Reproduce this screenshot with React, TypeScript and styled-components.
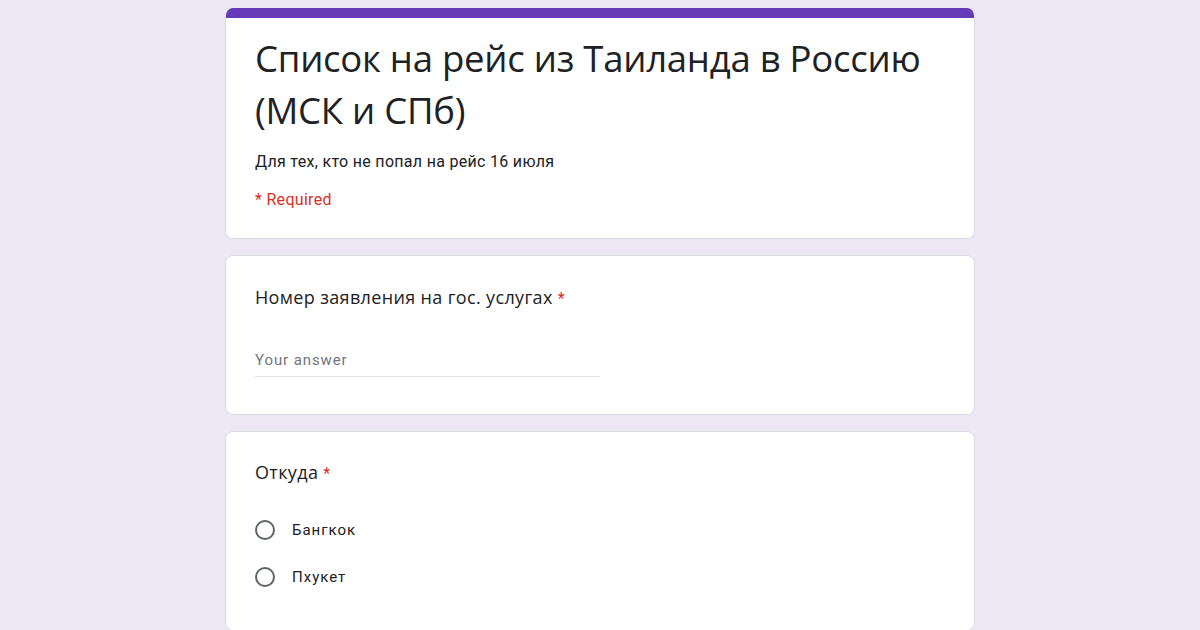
import React from "react";
import styled, { createGlobalStyle } from "styled-components";

const Global = createGlobalStyle`
  html, body { margin: 0; padding: 0; }
  body {
    background: #ede7f6;
    font-family: Roboto, "Noto Sans", Arial, sans-serif;
    color: #202124;
    height: 630px;
    overflow: hidden;
  }
`;

const Page = styled.div`
  width: 750px;
  margin: 8px auto 0;
  display: flex;
  flex-direction: column;
  gap: 16px;
`;

const Card = styled.div<{ $top?: boolean }>`
  background: #fff;
  border: 1px solid #dadce0;
  border-radius: 8px;
  box-sizing: border-box;
  overflow: hidden;
  ${(p) => (p.$top ? "border-top: none;" : "")}
`;

const TopBar = styled.div`
  height: 10px;
  background: #673ab7;
`;

const CardBody = styled.div<{ $pt: number; $pb: number }>`
  padding: ${(p) => p.$pt}px 29px ${(p) => p.$pb}px;
  display: flex;
  flex-direction: column;
`;

const Title = styled.h1`
  margin: 0;
  font-family: "Open Sans", Roboto, sans-serif;
  font-weight: 400;
  font-size: 36.5px;
  line-height: 52px;
  letter-spacing: -0.25px;
  color: #202124;
`;

const Desc = styled.div`
  margin-top: 15px;
  font-size: 16px;
  line-height: 22px;
  letter-spacing: 0.3px;
  color: #202124;
`;

const Required = styled.div`
  margin-top: 16px;
  font-size: 16px;
  line-height: 22px;
  letter-spacing: 0.3px;
  color: #d93025;
`;

const Question = styled.div`
  font-family: "Open Sans", Roboto, sans-serif;
  font-size: 18px;
  line-height: 26px;
  height: 26px;
  letter-spacing: 0.35px;
  color: #202124;
`;

const Star = styled.span`
  color: #d93025;
  margin-left: 5px;
  font-family: Roboto, sans-serif;
  font-size: 16px;
  line-height: 0;
`;

const Answer = styled.div`
  margin-top: 39px;
  width: 345px;
  border-bottom: 1px solid #e0e0e0;
  padding-bottom: 5px;
  font-size: 15px;
  line-height: 22px;
  color: #70757a;
  letter-spacing: 0.9px;
`;

const Options = styled.div`
  margin-top: 32px;
  display: flex;
  flex-direction: column;
  gap: 21px;
`;

const Option = styled.label`
  display: flex;
  align-items: center;
  gap: 17px;
  font-size: 15px;
  line-height: 26px;
  letter-spacing: 1px;
  color: #202124;
`;

const Radio = styled.span`
  width: 16px;
  height: 16px;
  border: 2px solid #5f6368;
  border-radius: 50%;
  flex: none;
`;

export default function App() {
  return (
    <>
      <Global />
      <Page>
        <Card $top>
          <TopBar />
          <CardBody $pt={14} $pb={27}>
            <Title>
              Список на рейс из Таиланда в Россию
              <br />
              (МСК и СПб)
            </Title>
            <Desc>Для тех, кто не попал на рейс 16 июля</Desc>
            <Required>* Required</Required>
          </CardBody>
        </Card>
        <Card>
          <CardBody $pt={28} $pb={37}>
            <Question>
              Номер заявления на гос. услугах<Star>*</Star>
            </Question>
            <Answer>Your answer</Answer>
          </CardBody>
        </Card>
        <Card>
          <CardBody $pt={27} $pb={40}>
            <Question>
              Откуда<Star>*</Star>
            </Question>
            <Options>
              <Option>
                <Radio />
                Бангкок
              </Option>
              <Option>
                <Radio />
                Пхукет
              </Option>
            </Options>
          </CardBody>
        </Card>
      </Page>
    </>
  );
}
